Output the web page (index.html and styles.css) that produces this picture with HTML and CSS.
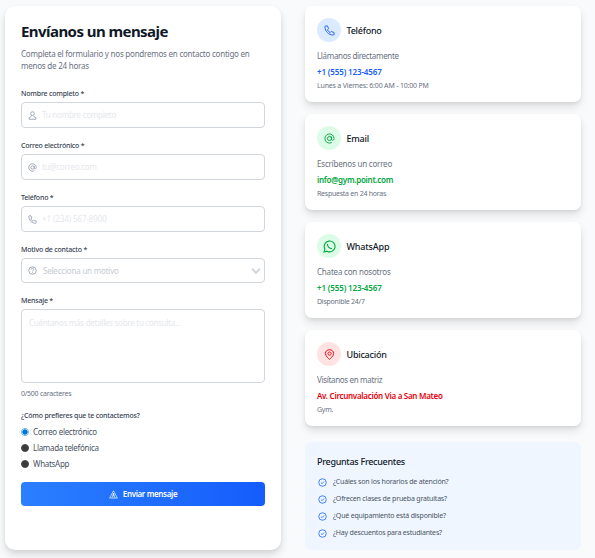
FILE: index.html
```html
<!DOCTYPE html>
<html lang="es">
<head>
<meta charset="utf-8">
<title>Contacto</title>
<link rel="stylesheet" href="styles.css">
</head>
<body>
<svg class="sprite" aria-hidden="true">
  <symbol id="phone" viewBox="0 0 24 24"><path d="M3.500 2h4l2.500 6-2.500 2.500c1 2.500 3.500 5 6 6L16 14l6 2.500v4c0 1-1 1.500-2 1.500C10 21.500 2.500 14 2 4c0-1 .5-2 1.500-2z"/></symbol>
  <symbol id="at" viewBox="0 0 24 24"><circle cx="12" cy="12" r="4.500"/><path d="M16.500 7.500V13c0 4 5.500 4 5.500-1A10 10 0 1 0 17 20.700"/></symbol>
  <symbol id="user" viewBox="0 0 24 24"><circle cx="12" cy="7" r="5"/><path d="M9 12l-1 3-5 3v4h18v-4l-5-3-1-3"/></symbol>
  <symbol id="help" viewBox="0 0 24 24"><circle cx="12" cy="12" r="10"/><path d="M8.500 9.500c0-4.500 7-4.500 7 0 0 2.500-3.500 2.500-3.500 5M12 16.500v2"/></symbol>
  <symbol id="check" viewBox="0 0 24 24"><circle cx="12" cy="12" r="10"/><path d="M8 12.500l3 2.500 5-5.500"/></symbol>
  <symbol id="pin" viewBox="0 0 24 24"><path d="M12 22.500S3 16 3 9.800C3 5 7 1.500 12 1.500s9 3.500 9 8.300c0 6.200-9 12.700-9 12.700z"/><circle cx="12" cy="10" r="3.500"/></symbol>
  <symbol id="whatsapp" viewBox="0 0 24 24"><path d="M2 22l1.500-5.300A10 10 0 1 1 7.300 20.600z"/><path d="M8.500 7.500c-1.500 3 4 9 8 8"/></symbol>
  <symbol id="send" viewBox="0 0 24 24"><path d="M12 2L1.500 21.500h21zM12 8v9M12 8L8 21M12 8l4 13"/></symbol>
</svg>
<main class="page">
  <form class="form-card">
    <h2 class="title">Envíanos un mensaje</h2>
    <p class="intro">Completa el formulario y nos pondremos en contacto contigo en menos de 24 horas</p>
    <div class="field">
      <label class="label" for="name">Nombre completo *</label>
      <div class="control"><svg class="icon"><use href="#user"/></svg><input class="input" id="name" placeholder="Tu nombre completo"></div>
    </div>
    <div class="field">
      <label class="label" for="mail">Correo electrónico *</label>
      <div class="control"><svg class="icon"><use href="#at"/></svg><input class="input input-mail" id="mail" placeholder="tu@correo.com"></div>
    </div>
    <div class="field">
      <label class="label" for="tel">Teléfono *</label>
      <div class="control"><svg class="icon"><use href="#phone"/></svg><input class="input input-tel" id="tel" placeholder="+1 (234) 567-8900"></div>
    </div>
    <div class="field">
      <span class="label">Motivo de contacto *</span>
      <div class="control control-select"><svg class="icon"><use href="#help"/></svg><span class="select-text">Selecciona un motivo</span><svg class="chevron" viewBox="0 0 10 6"><path d="M1 .8l4 4 4-4"/></svg></div>
    </div>
    <div class="field field-message">
      <label class="label" for="msg">Mensaje *</label>
      <textarea class="textarea" id="msg" placeholder="Cuéntanos más detalles sobre tu consulta..."></textarea>
      <p class="count">0/500 caracteres</p>
    </div>
    <p class="question">¿Cómo prefieres que te contactemos?</p>
    <label class="option"><input class="radio" type="radio" name="via" checked><span>Correo electrónico</span></label>
    <label class="option"><input class="radio" type="radio" name="via"><span>Llamada telefónica</span></label>
    <label class="option option-wa"><input class="radio" type="radio" name="via"><span>WhatsApp</span></label>
    <button class="submit" type="button"><svg class="icon-send"><use href="#send"/></svg><span>Enviar mensaje</span></button>
  </form>
  <section class="side">
    <article class="info blue">
      <header class="info-head"><span class="badge"><svg class="badge-icon"><use href="#phone"/></svg></span><h3 class="info-title">Teléfono</h3></header>
      <p class="desc">Llámanos directamente</p>
      <p class="value value-tel">+1 (555) 123-4567</p>
      <p class="note note-hours">Lunes a Viernes: 6:00 AM - 10:00 PM</p>
    </article>
    <article class="info green">
      <header class="info-head"><span class="badge"><svg class="badge-icon"><use href="#at"/></svg></span><h3 class="info-title">Email</h3></header>
      <p class="desc desc-wide">Escríbenos un correo</p>
      <p class="value">info@gym.point.com</p>
      <p class="note">Respuesta en 24 horas</p>
    </article>
    <article class="info green">
      <header class="info-head"><span class="badge"><svg class="badge-icon badge-icon-lg"><use href="#whatsapp"/></svg></span><h3 class="info-title info-title-wa">WhatsApp</h3></header>
      <p class="desc desc-wide">Chatea con nosotros</p>
      <p class="value value-tel">+1 (555) 123-4567</p>
      <p class="note">Disponible 24/7</p>
    </article>
    <article class="info red">
      <header class="info-head"><span class="badge"><svg class="badge-icon"><use href="#pin"/></svg></span><h3 class="info-title">Ubicación</h3></header>
      <p class="desc">Visítanos en matriz</p>
      <p class="value value-address">Av. Circunvalación Via a San Mateo</p>
      <p class="note">Gym.</p>
    </article>
    <aside class="faq">
      <h3 class="faq-title">Preguntas Frecuentes</h3>
      <ul class="faq-list">
        <li class="faq-item"><svg class="faq-icon"><use href="#check"/></svg><span>¿Cuáles son los horarios de atención?</span></li>
        <li class="faq-item"><svg class="faq-icon"><use href="#check"/></svg><span>¿Ofrecen clases de prueba gratuitas?</span></li>
        <li class="faq-item"><svg class="faq-icon"><use href="#check"/></svg><span>¿Qué equipamiento está disponible?</span></li>
        <li class="faq-item"><svg class="faq-icon"><use href="#check"/></svg><span>¿Hay descuentos para estudiantes?</span></li>
      </ul>
    </aside>
  </section>
</main>
</body>
</html>
```
FILE: styles.css
```css
* { box-sizing: border-box; margin: 0; padding: 0; }
body { background: #f9fafb; font-family: "Noto Sans", "Open Sans", sans-serif; color: #101828; font-size: 8px; line-height: 12px; width: 595px; height: 558px; overflow: hidden; }
h2, h3 { font-weight: 500; }
.sprite { display: none; }
svg { fill: none; stroke: currentColor; stroke-width: 2; flex: none; }
.page { display: grid; grid-template-columns: 276px 276px; gap: 24px; padding: 6px 0 0 5px; }
.form-card { height: 544px; background: #fff; border-radius: 10px; padding: 15px 16px; box-shadow: 0 5px 9px rgba(0,0,0,.12), 0 2px 4px rgba(0,0,0,.05); }
.title { font-size: 15px; font-weight: 700; line-height: 20px; letter-spacing: -.56px; }
.intro { margin: 7px 0 16px; color: #6a7282; letter-spacing: -.23px; }
.field { height: 52px; }
.label, .question { display: block; height: 14px; line-height: 12px; font-size: 7px; font-weight: 500; color: #364153; letter-spacing: -.2px; white-space: nowrap; }
.control { display: flex; align-items: center; height: 26px; border: 1px solid #d1d5dc; border-radius: 4px; padding: 0 6px; color: #99a1af; }
.control-select { height: 25px; padding-right: 3px; }
.icon { width: 9px; height: 9px; stroke-width: 2.4; }
.input { flex: 1; min-width: 0; margin-left: 5px; border: 0; outline: 0; background: transparent; font: inherit; letter-spacing: -.24px; }
.input-mail { letter-spacing: -.25px; }
.input-tel { letter-spacing: -.1px; }
.input::placeholder, .textarea::placeholder { color: #e5e7eb; opacity: 1; }
.select-text { flex: 1; margin-left: 6px; color: #c5cad2; letter-spacing: -.2px; }
.chevron { width: 10px; height: 6px; color: #d1d5dc; }
.field-message { height: 107px; margin-top: -1px; }
.textarea { display: block; width: 244px; height: 74px; border: 1px solid #d1d5dc; border-radius: 4px; padding: 7px; resize: none; font: inherit; letter-spacing: -.27px; }
.count { margin-top: 5px; font-size: 7px; color: #6a7282; letter-spacing: -.25px; }
.question { height: 12px; margin-top: 8px; margin-bottom: 2px; }
.option { display: flex; align-items: center; gap: 4px; height: 16px; color: #4a5565; letter-spacing: -.3px; }
.radio { appearance: none; width: 8px; height: 8px; border-radius: 50%; background: #3b3b3b; border: 1px solid #4a4a4a; }
.radio:checked { background: radial-gradient(circle, #0078d7 0 2.4px, #fff 2.9px); border-color: #65aee6; }
.submit { display: flex; align-items: center; justify-content: center; gap: 5px; width: 244px; height: 24px; margin-top: 10px; border: 0; border-radius: 4px; background: linear-gradient(90deg, #2b7fff, #155dfc); color: #fff; font: 600 8px/12px "Noto Sans", sans-serif; letter-spacing: -.36px; }
.icon-send { width: 9px; height: 9px; stroke-width: 1.7; }
.info { height: 96px; margin-bottom: 12px; padding: 12px; background: #fff; border-radius: 7px; box-shadow: 0 5px 8px rgba(0,0,0,.1), 0 2px 3px rgba(0,0,0,.06); }
.info-head { display: flex; align-items: center; gap: 5.500px; height: 24px; }
.badge { display: flex; align-items: center; justify-content: center; width: 24px; height: 24px; border-radius: 50%; }
.badge-icon { width: 11px; height: 11px; }
.badge-icon-lg { width: 13px; height: 13px; }
.info-title, .faq-title { font-size: 9px; letter-spacing: -.24px; }
.info-title { padding-top: 2px; }
.info-title-wa { letter-spacing: -.15px; }
.desc { margin-top: 8px; color: #6a7282; letter-spacing: -.33px; }
.desc-wide { letter-spacing: -.2px; }
.value { margin-top: 4px; font-weight: 600; letter-spacing: -.28px; }
.value-tel { letter-spacing: -.13px; }
.note { margin-top: 1.500px; font-size: 7px; color: #6a7282; letter-spacing: -.25px; }
.note-hours { letter-spacing: -.18px; }
.blue .badge { background: #dbeafe; }
.blue .badge, .blue .value { color: #155dfc; }
.green .badge { background: #dcfce7; }
.green .badge, .green .value { color: #00a63e; }
.red .badge { background: #ffe2e2; }
.red .badge, .red .value { color: #e7000b; }
.faq { height: 108px; margin-top: 16px; padding: 14px 12px; background: #eff6ff; border-radius: 6px; }
.faq-title { letter-spacing: -.3px; }
.faq-list { list-style: none; margin-top: 5.500px; }
.faq-item { display: flex; align-items: center; gap: 6px; height: 17px; padding-left: 1px; font-size: 7px; color: #4a5565; letter-spacing: -.19px; }
.faq-icon { width: 9px; height: 9px; color: #2b6fff; stroke-width: 2.3; }
```
